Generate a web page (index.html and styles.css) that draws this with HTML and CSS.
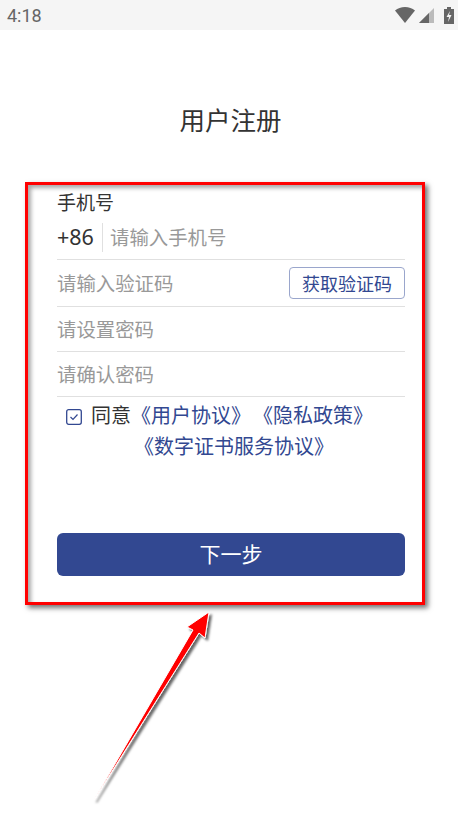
FILE: index.html
```html
<!DOCTYPE html>
<html lang="zh-CN">
<head>
  <meta charset="UTF-8">
  <meta name="viewport" content="width=device-width, initial-scale=1.0">
  <title>用户注册</title>
  <link rel="stylesheet" href="styles.css">
</head>
<body>
  <div class="status-bar">
    <span class="time">4:18</span>
    <div class="status-icons">
      <svg class="wifi" width="20" height="16" viewBox="0 0 20 16"><path d="M0 3.500C2.700 1.200 6.200 0 10 0s7.300 1.200 10 3.500L10 16z" fill="#666"/></svg>
      <svg class="signal" width="15" height="15" viewBox="0 0 15 15"><path d="M15 0v15H0z" fill="#bbb"/><path d="M10 5v10H0z" fill="#666"/></svg>
      <svg class="battery" width="10" height="17" viewBox="0 0 10 17"><path d="M3 0h4v2h3v15H0V2h3z" fill="#666"/><path d="M6 4L2.500 10H5l-1 5 3.500-7H5z" fill="#f5f5f5"/></svg>
    </div>
  </div>

  <h1 class="title">用户注册</h1>

  <form class="register-form">
    <label class="phone-label">手机号</label>
    <div class="row phone-row">
      <span class="area-code">+86</span>
      <span class="phone-placeholder">请输入手机号</span>
    </div>
    <div class="row code-row">
      <span class="placeholder">请输入验证码</span>
      <button type="button" class="code-btn">获取验证码</button>
    </div>
    <div class="row"><span class="placeholder">请设置密码</span></div>
    <div class="row"><span class="placeholder">请确认密码</span></div>

    <div class="agreement">
      <div class="agree-line">
        <svg class="checkbox" width="16" height="16" viewBox="0 0 16 16"><rect x="0.700" y="0.700" width="14.600" height="14.600" rx="2" fill="none" stroke="#324891" stroke-width="1.300"/><path d="M4.500 8l2.500 2.500 4.500-5" fill="none" stroke="#324891" stroke-width="1.200"/></svg>
        <span class="agree-text">同意</span>
        <a class="link">《用户协议》</a>
        <a class="link second-link">《隐私政策》</a>
      </div>
      <div class="agree-second"><a class="link">《数字证书服务协议》</a></div>
    </div>

    <button type="button" class="next-btn">下一步</button>
  </form>

  <!-- red annotation over the screenshot -->
  <div class="annotation-frame"></div>
  <svg class="annotation-arrow" width="458" height="820" viewBox="0 0 458 820">
    <defs>
      <filter id="arrowShadow" x="-30%" y="-30%" width="160%" height="160%">
        <feDropShadow dx="2.500" dy="2.500" stdDeviation="1.300" flood-color="#000" flood-opacity="0.6"/>
      </filter>
    </defs>
    <path d="M209 612L205 638L199 633L94 800L193 630L187 627z" fill="#f00" stroke="#fff" stroke-width="1" filter="url(#arrowShadow)"/>
  </svg>
</body>
</html>
```

FILE: styles.css
```css
* {
  box-sizing: border-box;
}

body {
  margin: 0;
  width: 458px;
  height: 820px;
  overflow: hidden;
  position: relative;
  background: #fff;
  color: #333;
  font-family: "Noto Sans", "Noto Sans CJK SC", sans-serif;
}

.status-bar {
  height: 30px;
  padding: 0 4px 0 7px;
  background: #f5f5f5;
  display: flex;
  justify-content: space-between;
  align-items: center;
}

.time {
  font-family: Roboto, sans-serif;
  font-size: 18px;
  color: #666;
}

.status-icons {
  display: flex;
  align-items: center;
}

.wifi {
  margin-right: 4px;
}

.signal {
  margin-right: 10px;
}

.title {
  margin: 70px 0 0;
  padding-left: 3px;
  height: 40px;
  line-height: 40px;
  text-align: center;
  font-size: 25.500px;
  font-weight: 400;
  color: #333;
}

.register-form {
  margin: 0 53px 0 57px;
  padding-top: 52px;
}

.phone-label {
  display: block;
  height: 23px;
  line-height: 23px;
  font-size: 19px;
}

.row {
  height: 45px;
  border-bottom: 1px solid #e0e0e0;
  display: flex;
  align-items: center;
  justify-content: space-between;
  font-size: 19.400px;
}

.phone-row {
  justify-content: flex-start;
}

.code-row {
  height: 47px;
}

.area-code {
  width: 46px;
  height: 29px;
  line-height: 27px;
  border-right: 1px solid #e0e0e0;
  font-size: 21.500px;
  white-space: nowrap;
}

.phone-placeholder {
  margin-left: 7px;
  padding-bottom: 1px;
  color: #999;
}

.placeholder {
  padding-bottom: 2px;
  color: #999;
}

.code-btn {
  width: 116px;
  height: 32px;
  padding: 0;
  border: 1px solid #9aa6cc;
  border-radius: 4px;
  background: #fff;
  color: #324891;
  font-family: inherit;
  font-size: 18px;
}

.agreement {
  height: 136px;
  padding-top: 5px;
  font-size: 20px;
  line-height: 27px;
}

.agree-line {
  display: flex;
  align-items: center;
  padding-left: 9px;
  white-space: nowrap;
}

.checkbox {
  margin: 2px 9px 0 0;
}

.agree-text {
  color: #333;
}

.link {
  color: #324891;
}

.second-link {
  margin-left: 2px;
}

.agree-second {
  margin-top: 4px;
  padding-left: 6px;
  text-align: center;
  white-space: nowrap;
}

.next-btn {
  display: block;
  width: 100%;
  height: 43px;
  padding: 0 0 3px;
  border: none;
  border-radius: 6px;
  background: #324891;
  color: #fff;
  font-family: inherit;
  font-size: 21px;
}

.annotation-frame {
  position: absolute;
  left: 25px;
  top: 182px;
  width: 400px;
  height: 423px;
  border: 3.500px solid #f00;
  box-shadow: 3px 3px 5px rgba(0, 0, 0, 0.55), inset 3px 3px 4px rgba(0, 0, 0, 0.35);
  pointer-events: none;
}

.annotation-arrow {
  position: absolute;
  left: 0;
  top: 0;
  pointer-events: none;
}
```
